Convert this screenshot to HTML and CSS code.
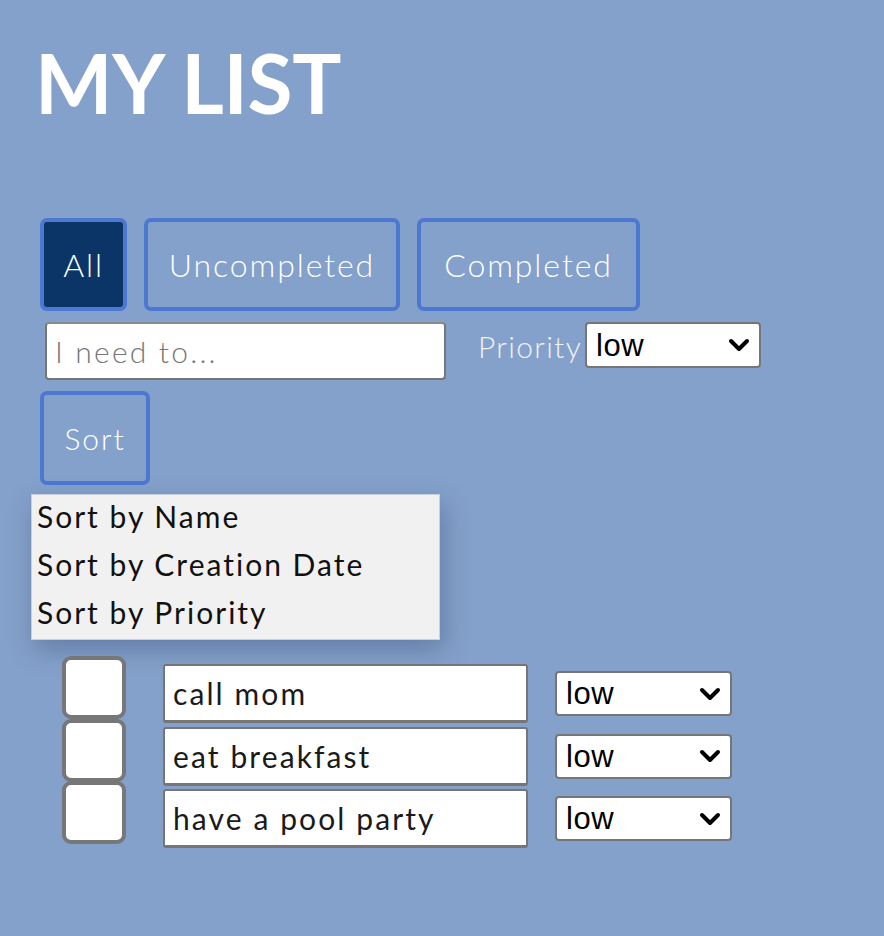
FILE: index.html
```html
<!DOCTYPE html>
<html lang="en">
<head>
<meta charset="utf-8">
<title>My List</title>
<link rel="stylesheet" href="styles.css">
</head>
<body>
<main class="app">
  <h1 class="title">MY LIST</h1>

  <div class="filters">
    <button class="btn btn-all active">All</button>
    <button class="btn btn-unc">Uncompleted</button>
    <button class="btn btn-comp">Completed</button>
  </div>

  <form class="add-row">
    <input class="new-todo" type="text" placeholder="I need to...">
    <label class="prio-label">Priority</label>
    <div class="select-box select-top">
      <select><option>low</option><option>medium</option><option>high</option></select>
      <svg class="chev" width="22" height="14" viewBox="0 0 22 14"><path d="M3 3 L11 11 L19 3" fill="none" stroke="#000" stroke-width="4" stroke-linecap="round" stroke-linejoin="round"/></svg>
    </div>
  </form>

  <div class="sort">
    <button class="btn btn-sort">Sort</button>
    <ul class="menu">
      <li>Sort by Name</li>
      <li>Sort by Creation Date</li>
      <li>Sort by Priority</li>
    </ul>
  </div>

  <ul class="todos">
    <li class="todo">
      <input class="check" type="checkbox">
      <input class="todo-text" type="text" value="call mom">
      <div class="select-box select-row">
        <select><option>low</option><option>medium</option><option>high</option></select>
        <svg class="chev" width="22" height="14" viewBox="0 0 22 14"><path d="M3 3 L11 11 L19 3" fill="none" stroke="#000" stroke-width="4" stroke-linecap="round" stroke-linejoin="round"/></svg>
      </div>
    </li>
    <li class="todo">
      <input class="check" type="checkbox">
      <input class="todo-text" type="text" value="eat breakfast">
      <div class="select-box select-row">
        <select><option>low</option><option>medium</option><option>high</option></select>
        <svg class="chev" width="22" height="14" viewBox="0 0 22 14"><path d="M3 3 L11 11 L19 3" fill="none" stroke="#000" stroke-width="4" stroke-linecap="round" stroke-linejoin="round"/></svg>
      </div>
    </li>
    <li class="todo">
      <input class="check" type="checkbox">
      <input class="todo-text" type="text" value="have a pool party">
      <div class="select-box select-row">
        <select><option>low</option><option>medium</option><option>high</option></select>
        <svg class="chev" width="22" height="14" viewBox="0 0 22 14"><path d="M3 3 L11 11 L19 3" fill="none" stroke="#000" stroke-width="4" stroke-linecap="round" stroke-linejoin="round"/></svg>
      </div>
    </li>
  </ul>
</main>
</body>
</html>
```
FILE: styles.css
```css
* { box-sizing: border-box; }

html, body {
  margin: 0;
  padding: 0;
  background: #84a1cb;
  min-height: 100%;
}

body {
  font-family: Lato, "Open Sans", sans-serif;
  color: #fff;
}

.app {
  padding: 34px 0 40px 40px;
  display: flex;
  flex-direction: column;
  align-items: flex-start;
}

.title {
  margin: 0 0 0 -5px;
  font-family: Lato, sans-serif;
  font-weight: 700;
  font-size: 82px;
  line-height: 96px;
  letter-spacing: -0.3px;
  color: #fff;
}

.filters {
  display: flex;
  gap: 17px;
  margin-top: 88px;
}

.btn {
  height: 93px;
  border: 4px solid #4d78d1;
  border-radius: 7px;
  background: transparent;
  color: #fff;
  font-family: Lato, sans-serif;
  font-weight: 300;
  font-size: 32px;
  letter-spacing: 1.9px;
  padding: 0;
  cursor: pointer;
}

.btn.active { background: #0b3566; }
.btn-all { width: 87px; }
.btn-unc { width: 256px; }
.btn-comp { width: 223px; }

.add-row {
  display: flex;
  align-items: flex-start;
  margin: 11px 0 0 5px;
}

.new-todo {
  width: 401px;
  height: 58px;
  border: 2px solid #767676;
  border-top-color: #8a8a8a;
  border-radius: 4px;
  background: #fff;
  font-family: Lato, sans-serif;
  font-weight: 300;
  font-size: 30px;
  letter-spacing: 2.2px;
  padding: 0 8px;
  color: #222;
}
.new-todo::placeholder { color: #777; }

.prio-label {
  margin: 6px 3px 0 32px;
  font-family: Lato, sans-serif;
  font-weight: 300;
  font-size: 30px;
  letter-spacing: 1.3px;
  color: #f2f2f2;
}

.select-box {
  display: flex;
  align-items: center;
  background: #fff;
  border: 2px solid #767676;
  border-radius: 4px;
}

.select-box select {
  appearance: none;
  -webkit-appearance: none;
  border: none;
  background: transparent;
  flex: 1;
  height: 100%;
  font-family: "Liberation Sans", Arial, sans-serif;
  font-size: 31px;
  letter-spacing: 0.5px;
  color: #000;
  padding: 0 0 0 9px;
  outline: none;
}

.chev { margin-right: 9px; flex: none; }

.select-top { width: 176px; height: 46px; }

.sort {
  display: flex;
  flex-direction: column;
  align-items: flex-start;
  margin-top: 11px;
}

.btn-sort { width: 110px; height: 94px; font-size: 30px; }

.menu {
  list-style: none;
  margin: 9px 0 0 -9px;
  padding: 0 0 3px 5px;
  width: 409px;
  background: #f1f1f1;
  border: 1px solid #c8d0dc;
  box-shadow: 4px 10px 24px rgba(40, 60, 100, 0.35);
  color: #111;
  font-family: Lato, sans-serif;
  font-size: 30px;
  letter-spacing: 2px;
  line-height: 48px;
}

.menu li:first-child { margin-top: -3px; }

.todos {
  list-style: none;
  margin: 16px 0 0 22px;
  padding: 0;
  display: flex;
  flex-direction: column;
}

.todo {
  display: flex;
  align-items: flex-start;
  height: 62.5px;
}

.check {
  appearance: none;
  -webkit-appearance: none;
  margin: 0;
  width: 64px;
  height: 63px;
  border: 4px solid #777;
  border-radius: 9px;
  background: #fff;
  flex: none;
}

.todo-text {
  margin: 8px 0 0 37px;
  width: 365px;
  height: 59px;
  border: 2px solid #767676;
  border-bottom-width: 3px;
  border-radius: 3px;
  background: #fff;
  font-family: Lato, sans-serif;
  font-size: 30px;
  letter-spacing: 2.1px;
  color: #1a1a1a;
  padding: 0 8px;
}

.select-row {
  margin: 15px 0 0 27px;
  width: 177px;
  height: 45px;
}
```
